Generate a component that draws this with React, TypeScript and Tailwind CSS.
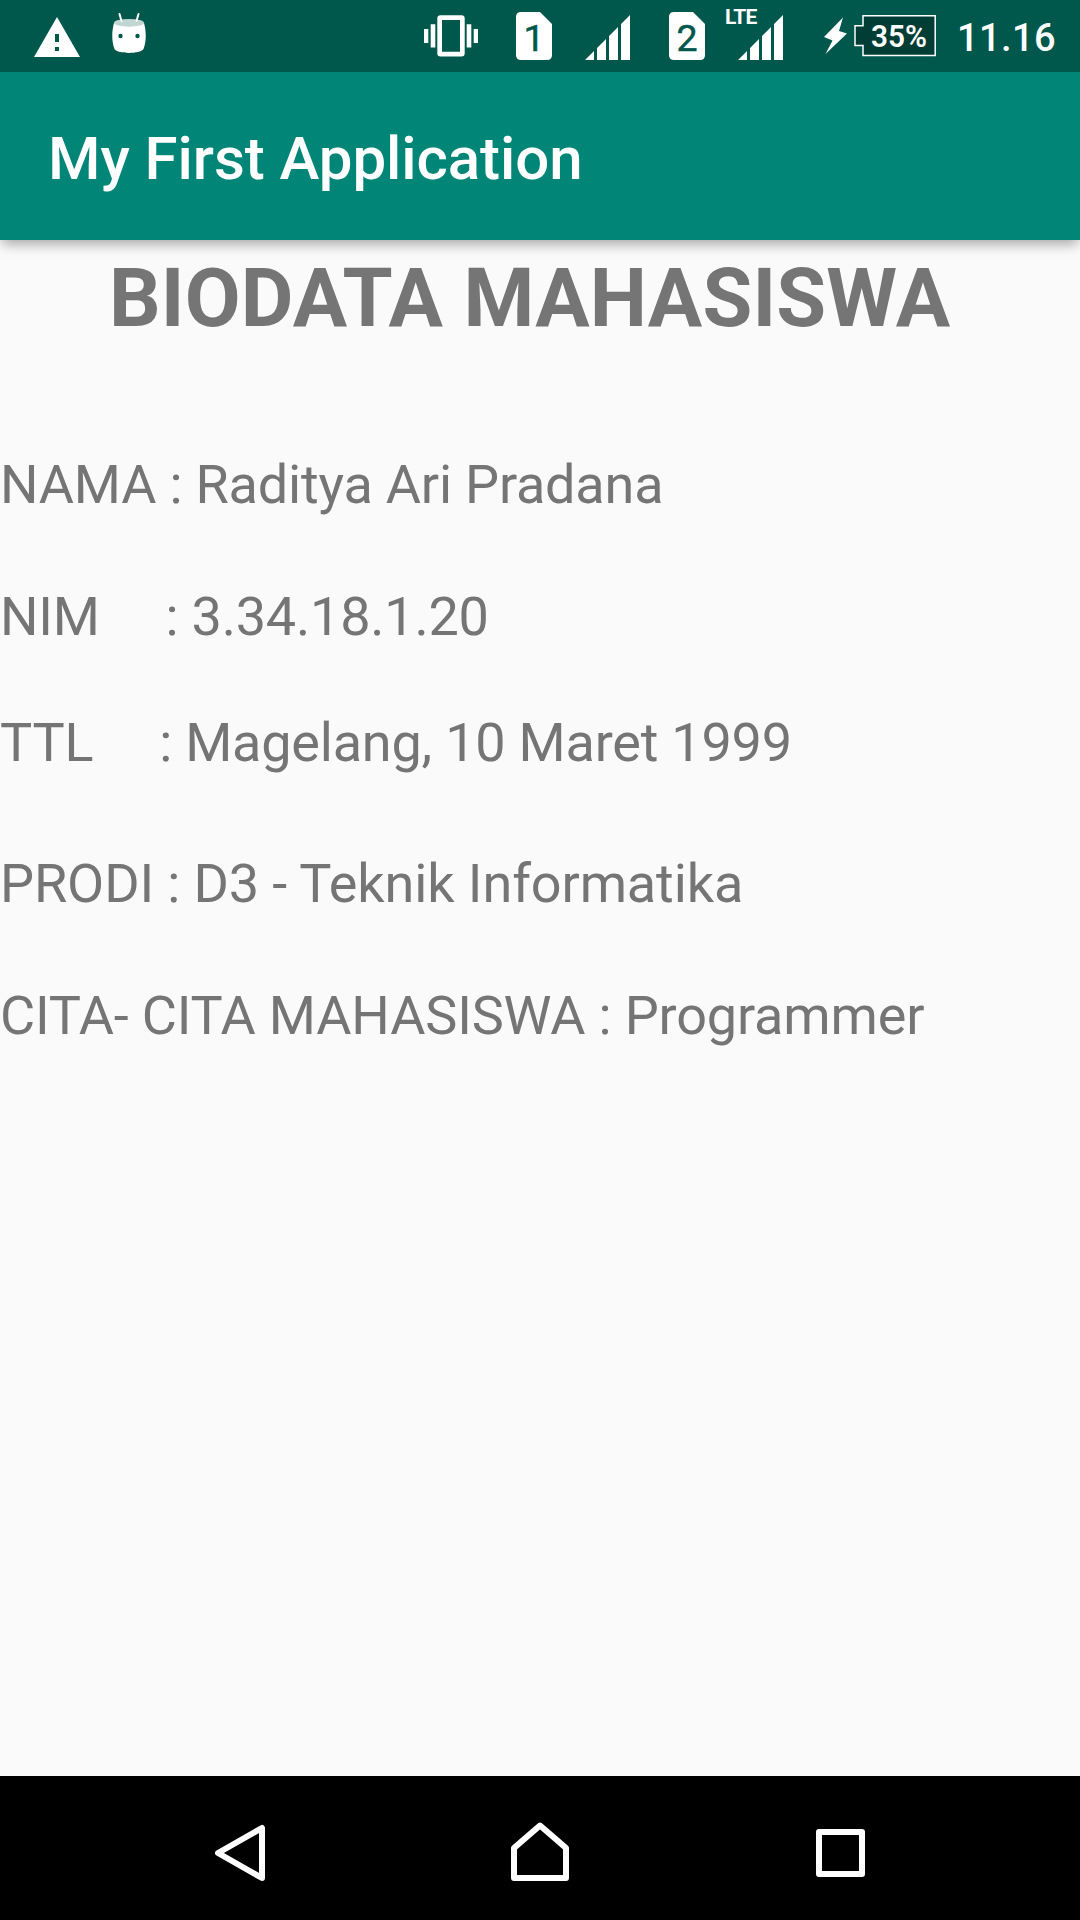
import React from 'react';

const rows = [
  { text: 'NAMA : Raditya Ari Pradana', box: 'h-[132px] tracking-[-0.2px]' },
  { text: 'NIM     : 3.34.18.1.20', box: 'h-[126px] tracking-[-0.22px]' },
  { text: 'TTL     : Magelang, 10 Maret 1999', box: 'h-[141px] tracking-[-0.22px]' },
  { text: 'PRODI : D3 - Teknik Informatika', box: 'h-[132px] tracking-[-0.12px]' },
  { text: 'CITA- CITA MAHASISWA : Programmer', box: 'h-[132px] tracking-[-0.16px]' },
];

function Warning() {
  return (
    <svg className="ml-[34px] shrink-0" width="46" height="72" viewBox="34 0 46 72">
      <path fill="#fff" d="M57 17L80 57H34Z" />
      <path fill="#00574b" d="M55 34H59V42H55ZM55 47H59V51H55Z" />
    </svg>
  );
}

function Robot() {
  return (
    <svg className="ml-8 shrink-0" width="34" height="72" viewBox="112 0 34 72">
      <path fill="#fff" d="M114 23C118 25 140 25 144 23C146.400 31 146.400 42 143.500 49C140 54.200 118 54.200 114.500 49C111.600 42 111.600 31 114 23Z" />
      <ellipse cx="129" cy="22.800" rx="15" ry="3.900" fill="#c0d6d2" />
      <path stroke="#fff" strokeWidth="2" strokeLinecap="round" d="M119.500 14L121.500 21M138.500 14L136.500 21" />
      <circle cx="120.500" cy="36" r="2.200" fill="#00574b" />
      <circle cx="137.500" cy="36" r="2.200" fill="#00574b" />
    </svg>
  );
}

function Vibrate() {
  return (
    <svg className="ml-[278px] shrink-0" width="54" height="72" viewBox="424 0 54 72">
      <path fill="#fff" d="M424 29H428.300V43H424ZM430.700 24.300H435.300V47.500H430.700ZM466.700 24.300H471.300V47.500H466.700ZM473.700 29H478V43H473.700Z" />
      <path fill="#fff" fillRule="evenodd" d="M440.500 15.300H461.500Q464.700 15.300 464.700 18.500V53.300Q464.700 56.500 461.500 56.500H440.500Q437.300 56.500 437.300 53.300V18.500Q437.300 15.300 440.500 15.300ZM442 20V51.800H460V20Z" />
    </svg>
  );
}

function Sim({ n }: { n: string }) {
  return (
    <svg className="shrink-0" width="36" height="72" viewBox="0 0 36 72">
      <path fill="#fff" d="M5 12H24L36 24V55Q36 60 31 60H5Q0 60 0 55V17Q0 12 5 12Z" />
      <text x="18" y="51" textAnchor="middle" fontSize="37.500" fontWeight="400" fill="#00574b" stroke="#00574b" strokeWidth="0.500">{n}</text>
    </svg>
  );
}

function Signal() {
  return (
    <svg className="shrink-0" width="45" height="72" viewBox="0 0 45 72">
      <path fill="#fff" d="M0 60L9 51V60ZM12 60V48L21 39V60ZM24 60V36L33 27V60ZM36 60V24L45 15V60Z" />
    </svg>
  );
}

function Battery() {
  return (
    <svg className="ml-[41px] shrink-0" width="112" height="72" viewBox="824 0 112 72">
      <path fill="#fff" d="M843 17.500L824 37L832.500 40.500L825.500 54L847 33.500L839 31Z" />
      <path fill="#003d34" stroke="#fff" strokeWidth="1.500" d="M863 15.800H935.200V55.500H863V45.500H855V25.800H863Z" />
      <text x="899" y="46.500" textAnchor="middle" fontSize="31.500" fontWeight="600" textLength="56" lengthAdjust="spacingAndGlyphs" fill="#fff">35%</text>
    </svg>
  );
}

export default function App() {
  return (
    <div className="flex h-[1920px] w-[1080px] flex-col overflow-hidden bg-[#fafafa] font-['Roboto',sans-serif]">
      <header className="z-20 flex h-[72px] shrink-0 items-center bg-[#00574b] text-white">
        <Warning />
        <Robot />
        <Vibrate />
        <div className="ml-[38px] flex"><Sim n="1" /></div>
        <div className="ml-[33px] flex"><Signal /></div>
        <div className="ml-[39px] flex"><Sim n="2" /></div>
        <div className="relative ml-[33px] flex">
          <Signal />
          <span className="absolute left-[-13px] top-[5px] text-[21px] font-bold leading-[25px] tracking-[-0.8px]">LTE</span>
        </div>
        <Battery />
        <span className="ml-[21px] mt-[4px] text-[38px] font-medium leading-[44px] tracking-[0.4px]">11.16</span>
      </header>
      <div className="z-10 flex h-[168px] shrink-0 items-center bg-[#008577] pl-12 pt-[5px] text-[60px] font-medium tracking-[-0.06px] text-white shadow-[0_6px_12px_-2px_rgba(0,0,0,0.34)]">
        My First Application
      </div>
      <main className="flex-1 text-[#757575]">
        <h1 className="h-[193px] whitespace-nowrap pl-[109px] pt-[10px] text-[81px] font-bold leading-[98px] tracking-[0.16px]">BIODATA MAHASISWA</h1>
        {rows.map((r) => (
          <p key={r.text} className={'whitespace-pre pt-5 text-[54px] leading-[63px] ' + r.box}>{r.text}</p>
        ))}
      </main>
      <nav className="h-36 shrink-0 bg-black">
        <svg width="1080" height="144" viewBox="0 0 1080 144" fill="none" stroke="#fff" strokeWidth="6" strokeLinejoin="round">
          <path d="M262 52V102L218 77Z" />
          <path d="M540 49.500L566 72V102H514V72Z" />
          <path d="M819 56H862V98H819Z" />
        </svg>
      </nav>
    </div>
  );
}
